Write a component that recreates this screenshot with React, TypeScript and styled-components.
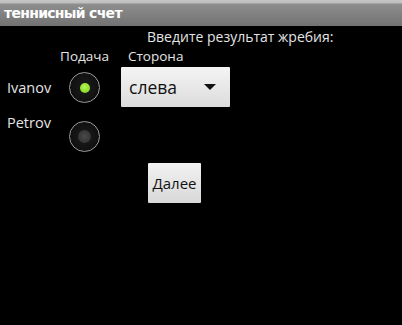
import styled, { createGlobalStyle } from "styled-components";

const GlobalStyle = createGlobalStyle`
  html, body {
    margin: 0;
    padding: 0;
    background: #000;
  }
  body {
    width: 402px;
    height: 325px;
    overflow: hidden;
    font-family: "Open Sans", "DejaVu Sans", sans-serif;
  }
`;

export default function App() {
  const players = [
    { name: "Ivanov", serve: true },
    { name: "Petrov", serve: false },
  ];

  return (
    <Screen>
      <GlobalStyle />
      <TitleBar>теннисный счет</TitleBar>
      <Prompt>Введите результат жребия:</Prompt>
      <Table>
        <span />
        <HeaderCell $center>Подача</HeaderCell>
        <HeaderCell>Сторона</HeaderCell>

        <NameCell>{players[0].name}</NameCell>
        <RadioCell>
          <Radio $checked={players[0].serve} />
        </RadioCell>
        <SpinnerCell>
          <Spinner>
            слева
            <Arrow />
          </Spinner>
        </SpinnerCell>

        <NameCell $top>{players[1].name}</NameCell>
        <RadioCell>
          <Radio $checked={players[1].serve} />
        </RadioCell>
        <span />
      </Table>
      <ButtonRow>
        <Button>Далее</Button>
      </ButtonRow>
    </Screen>
  );
}

const Screen = styled.div`
  width: 402px;
  height: 325px;
  background: #000;
  color: #e4e4e4;
  display: flex;
  flex-direction: column;
`;

const TitleBar = styled.div`
  height: 26px;
  box-sizing: border-box;
  padding: 3px 0 0 4px;
  background: linear-gradient(#c8c8c8 0, #bdbdbd 3px, #8e8e8e 4px, #727272 100%);
  color: #fff;
  font-family: "DejaVu Sans", sans-serif;
  font-weight: bold;
  font-size: 14px;
  line-height: 20px;
  letter-spacing: -0.7px;
`;

const Prompt = styled.div`
  margin: 2px 0 0 147px;
  font-size: 14px;
  line-height: 18px;
`;

const Table = styled.div`
  display: grid;
  grid-template-columns: 54px 61px 116px;
  grid-template-rows: 18px 47px 50px;
`;

const HeaderCell = styled.div<{ $center?: boolean }>`
  font-size: 13.5px;
  line-height: 18px;
  margin-top: 1px;
  text-align: ${(p) => (p.$center ? "center" : "left")};
  padding-left: ${(p) => (p.$center ? "0" : "13px")};
`;

const NameCell = styled.div<{ $top?: boolean }>`
  font-size: 14.5px;
  line-height: 20px;
  padding-left: 7px;
  display: flex;
  align-items: ${(p) => (p.$top ? "flex-start" : "center")};
  padding-top: ${(p) => (p.$top ? "2px" : "0")};
`;

const RadioCell = styled.div`
  display: flex;
  align-items: center;
  justify-content: center;
`;

const Radio = styled.div<{ $checked?: boolean }>`
  width: 31px;
  height: 31px;
  box-sizing: border-box;
  border-radius: 50%;
  border: 1.5px solid #9a9a9a;
  background: radial-gradient(circle, #1c1c1c 0, #101010 70%, #181818 100%);
  display: flex;
  align-items: center;
  justify-content: center;
  &::after {
    content: "";
    width: ${(p) => (p.$checked ? "10px" : "13px")};
    height: ${(p) => (p.$checked ? "10px" : "13px")};
    border-radius: 50%;
    background: ${(p) =>
      p.$checked
        ? "radial-gradient(circle at 45% 40%, #b6f25a 0, #8ee02c 60%, #6cb81e 100%)"
        : "radial-gradient(circle, #4a4a4a 0, #353535 70%, #2a2a2a 100%)"};
  }
`;

const SpinnerCell = styled.div`
  padding: 3px 0 0 6px;
`;

const Spinner = styled.div`
  width: 109px;
  height: 40px;
  box-sizing: border-box;
  padding: 0 14px 0 8px;
  background: linear-gradient(#f4f4f4, #dcdcdc);
  border-radius: 1px;
  color: #111;
  font-size: 17.5px;
  display: flex;
  align-items: center;
  justify-content: space-between;
`;

const Arrow = styled.span`
  width: 0;
  height: 0;
  border-left: 6px solid transparent;
  border-right: 6px solid transparent;
  border-top: 6px solid #111;
`;

const ButtonRow = styled.div`
  padding: 2px 0 0 148px;
`;

const Button = styled.div`
  width: 53px;
  height: 40px;
  background: linear-gradient(#f2f2f2, #d8d8d8);
  border-radius: 1px;
  color: #111;
  font-size: 15px;
  display: flex;
  align-items: center;
  justify-content: center;
`;
